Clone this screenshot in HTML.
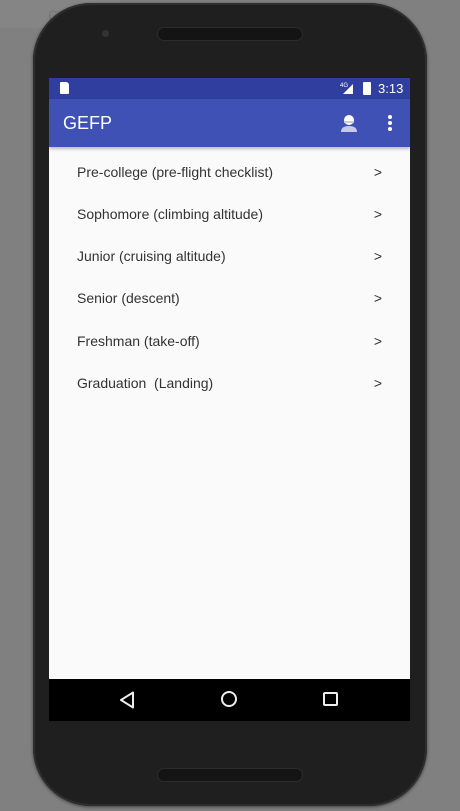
<!DOCTYPE html>
<html><head><style>
body{margin:0;width:460px;height:811px;background:#808080;position:relative;overflow:hidden;font-family:"Liberation Sans",sans-serif}
.phone{position:absolute;left:33px;top:3px;width:394px;height:803px;background:#1f1f1f;border-radius:58px;box-shadow:0 0 0 2px #2e2e2e inset,0 1px 3px rgba(0,0,0,.5)}
.spk{position:absolute;left:158px;width:144px;height:12px;border-radius:6px;background:#141414;box-shadow:0 0 0 1px #2c2c2c}
.screen{position:absolute;left:49px;top:78px;width:361px;height:643px;background:#fafafa;overflow:hidden}
.sb{height:21px;background:#303f9f;color:#fff;font-size:13px;position:relative}
.tb{height:48px;background:#3f51b5;color:#fff;position:relative;box-shadow:0 2px 3px rgba(0,0,0,.25)}
.item{position:absolute;left:28px;right:28px;font-size:14px;color:#333}
.item span{position:absolute;right:0}
.nav{position:absolute;left:0;bottom:0;width:361px;height:42px;background:#000}
</style></head><body>
<div style="position:absolute;left:0;top:0;width:120px;height:28px;background:#858585;color:#777;font-size:14px;padding-left:48px;box-sizing:border-box;line-height:30px">Ctrl+N</div>
<div class="phone"></div>
<div class="spk" style="top:28px"></div>
<div class="spk" style="top:769px"></div>
<div style="position:absolute;left:102px;top:30px;width:7px;height:7px;border-radius:50%;background:#333"></div>
<div class="screen">
<div class="sb">
<div style="position:absolute;left:11px;top:4px;width:9px;height:12px;background:#fff;border-radius:1px 3px 1px 1px"></div>
<svg style="position:absolute;left:291px;top:3px" width="14" height="14"><path d="M3 13 L13 3 L13 13Z" fill="#fff"/><text x="0" y="6" font-size="6" fill="#fff">4G</text></svg>
<div style="position:absolute;left:314px;top:4px;width:8px;height:13px;background:#fff;border-radius:1px"></div>
<div style="position:absolute;left:329px;top:3px">3:13</div>
</div>
<div class="tb">
<div style="position:absolute;left:14px;top:14px;font-size:18px">GEFP</div>
<svg style="position:absolute;left:291px;top:15px" width="18" height="18"><circle cx="9" cy="6" r="5" fill="#fff"/><path d="M1 18 Q1 12 9 12 Q17 12 17 18Z" fill="#c5cae9"/><rect x="4" y="7" width="10" height="2" fill="#c5cae9"/></svg>
<svg style="position:absolute;left:337px;top:15px" width="8" height="18"><circle cx="4" cy="3" r="2" fill="#fff"/><circle cx="4" cy="9" r="2" fill="#fff"/><circle cx="4" cy="15" r="2" fill="#fff"/></svg>
</div>
<div class="item" style="top:86px">Pre-college (pre-flight checklist)<span>&gt;</span></div>
<div class="item" style="top:128px">Sophomore (climbing altitude)<span>&gt;</span></div>
<div class="item" style="top:170px">Junior (cruising altitude)<span>&gt;</span></div>
<div class="item" style="top:212px">Senior (descent)<span>&gt;</span></div>
<div class="item" style="top:255px">Freshman (take-off)<span>&gt;</span></div>
<div class="item" style="top:297px">Graduation&nbsp; (Landing)<span>&gt;</span></div>
<div class="nav">
<svg width="361" height="42"><path d="M72 21 L84 13.5 L84 28.5Z" fill="none" stroke="#eee" stroke-width="2" stroke-linejoin="round"/><circle cx="180" cy="20" r="7" fill="none" stroke="#eee" stroke-width="2"/><rect x="275" y="14" width="13" height="12" rx="1" fill="none" stroke="#eee" stroke-width="2"/></svg>
</div>
</div>
</body></html>
